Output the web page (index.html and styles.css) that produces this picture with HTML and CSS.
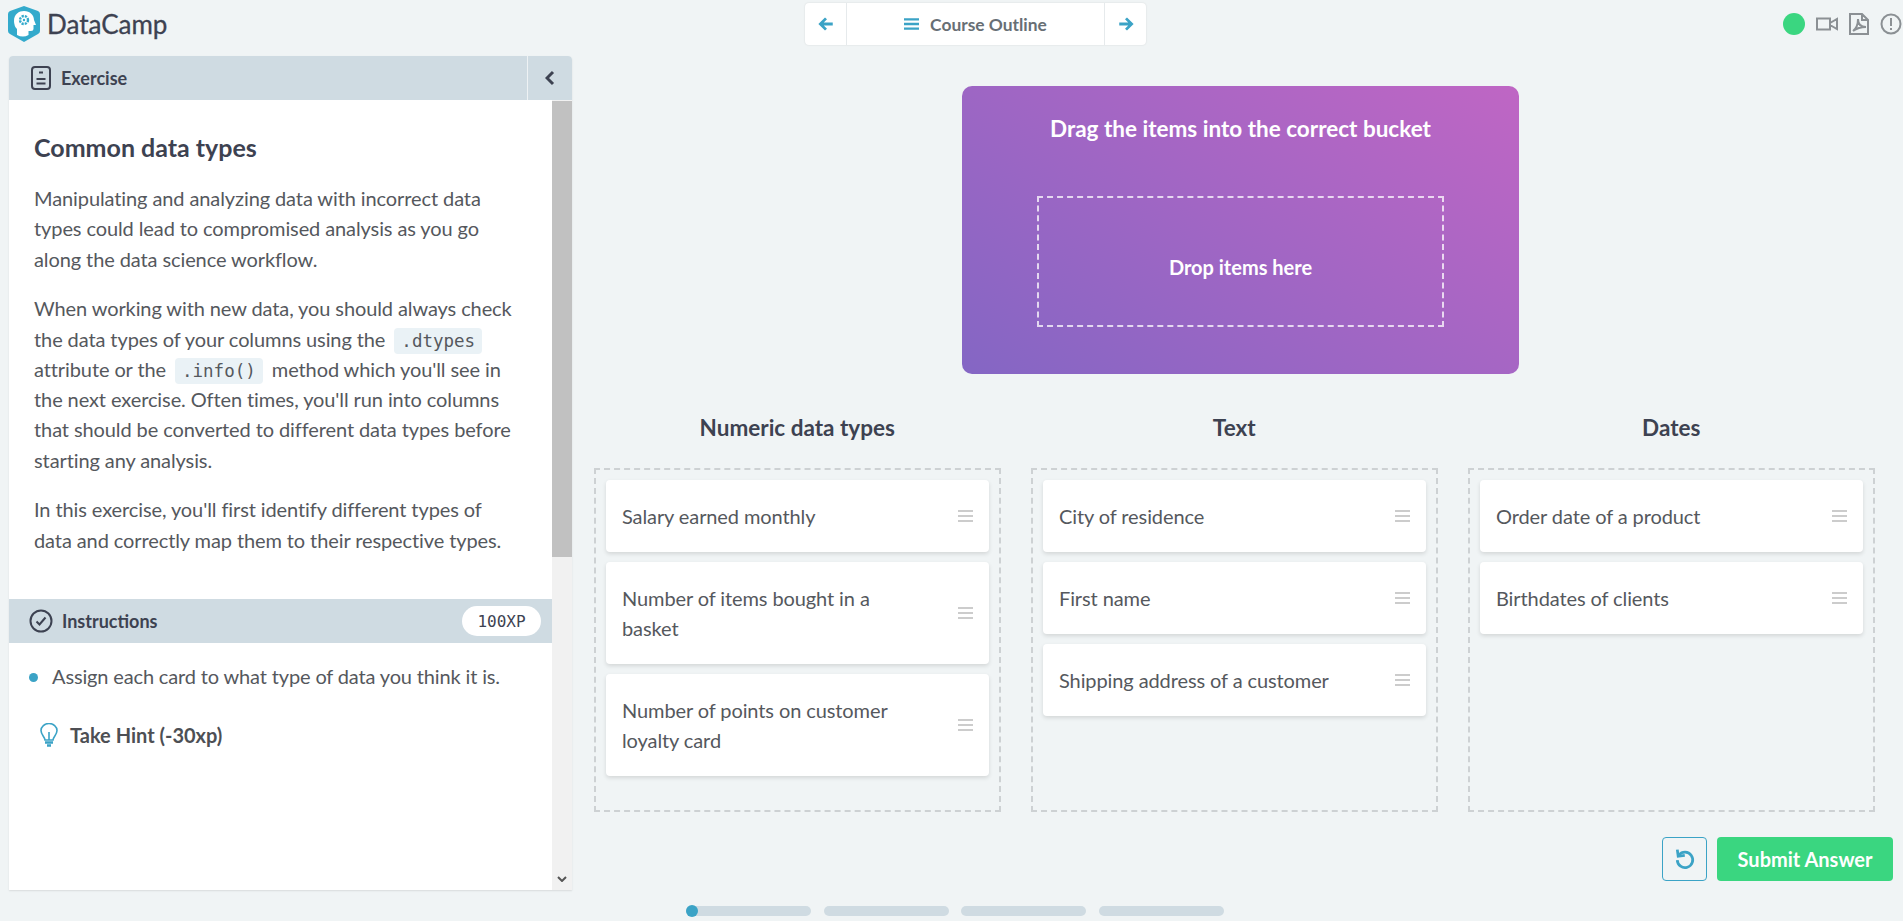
FILE: index.html
```html
<!DOCTYPE html>
<html lang="en">
<head>
  <meta charset="UTF-8">
  <title>Common data types | DataCamp</title>
  <link rel="stylesheet" href="styles.css">
</head>
<body>

<header class="topbar">
  <div class="brand">
    <svg class="brand-logo" viewBox="0 0 32 36" width="32" height="36">
      <path d="M16 0 L30 5 Q32 6 32 8 V25 Q32 27 30 28 L16 36 L2 28 Q0 27 0 25 V8 Q0 6 2 5 Z" fill="#3ac"/>
      <path d="M9 29 V23 Q6 20 6 15 C6 8 11 5 16 5 C22 5 26 9 26 14 L28 19 H25.5 V23 Q25.5 25 23 25 H20.5 V29 Q15 32 9 29 Z" fill="#fff"/>
      <circle cx="16" cy="14" r="4" fill="none" stroke="#3ac" stroke-width="2.4" stroke-dasharray="2.2 1"/>
      <circle cx="16" cy="14" r="1.2" fill="#3ac"/>
    </svg>
    <span>DataCamp</span>
  </div>
  <nav class="course-nav">
    <a class="nav-arrow">
      <svg viewBox="0 0 16 16" width="18" height="18"><path d="M14 8H3M8 3L3 8l5 5" class="icon-blue"/></svg>
    </a>
    <a class="nav-outline">
      <svg viewBox="0 0 16 14" width="15" height="14"><path d="M0 2h16M0 7h16M0 12h16" class="icon-blue"/></svg>
      Course Outline
    </a>
    <a class="nav-arrow">
      <svg viewBox="0 0 16 16" width="18" height="18"><path d="M2 8h11M8 3l5 5-5 5" class="icon-blue"/></svg>
    </a>
  </nav>
  <div class="status">
    <span class="status-dot"></span>
    <svg viewBox="0 0 22 14" width="22" height="14"><path d="M1 1.500h13v11H1zM14 6l7-4v10l-7-4" class="icon-grey"/></svg>
    <svg viewBox="0 0 20 22" width="20" height="22"><path d="M1 1h12l6 6v14H1zM13 1v6h6M4 18c4-3 5-8 5-12 0 5 3 8 8 8-5 0-9 1-13 4z" class="icon-grey"/></svg>
    <svg viewBox="0 0 22 22" width="22" height="22"><circle cx="11" cy="11" r="9.500" class="icon-grey"/><path d="M11 5v8M11 15v2" class="icon-grey"/></svg>
  </div>
</header>

<main class="workspace">
  <aside class="panel">
    <div class="panel-head">
      <div class="panel-title">
        <svg viewBox="0 0 20 24" width="20" height="24"><rect x="1" y="1" width="18" height="22" rx="3" class="icon-dark"/><path d="M8 6.500h4M5.500 13h9M5.500 17.500h9" class="icon-dark"/></svg>
        Exercise
      </div>
      <button class="collapse">
        <svg viewBox="0 0 10 16" width="10" height="16"><path d="M8 2L2 8l6 6" class="icon-dark thick"/></svg>
      </button>
    </div>
    <div class="panel-scroll">
      <div class="panel-body">
        <section class="assignment">
          <h1>Common data types</h1>
          <p>Manipulating and analyzing data with incorrect data types could lead to compromised analysis as you go along the data science workflow.</p>
          <p>When working with new data, you should always check the data types of your columns using the <code>.dtypes</code> attribute or the <code>.info()</code> method which you'll see in the next exercise. Often times, you'll run into columns that should be converted to different data types before starting any analysis.</p>
          <p>In this exercise, you'll first identify different types of data and correctly map them to their respective types.</p>
        </section>
        <div class="instructions-head">
          <div class="panel-title">
            <svg viewBox="0 0 24 24" width="24" height="24"><circle cx="12" cy="12" r="10.500" class="icon-dark"/><path d="M7.500 12.500l3 3 6-7" class="icon-dark"/></svg>
            Instructions
          </div>
          <span class="xp">100XP</span>
        </div>
        <ul class="instructions">
          <li>Assign each card to what type of data you think it is.</li>
        </ul>
        <a class="hint">
          <svg viewBox="0 0 20 24" width="20" height="24"><path d="M6 17c0-3-4-5-4-9.500a8 7 0 0 1 16 0C18 12 14 14 14 17z M10 17V9" class="icon-blue thin"/><path d="M6 19.500h8M8 22.500h4" class="icon-blue"/></svg>
          Take Hint (-30xp)
        </a>
      </div>
      <div class="scrollbar">
        <div class="scroll-thumb"></div>
        <svg class="scroll-down" viewBox="0 0 10 6" width="10" height="6"><path d="M1 1l4 4 4-4" class="icon-grey-dark"/></svg>
      </div>
    </div>
  </aside>

  <section class="exercise">
    <div class="prompt">
      <h2>Drag the items into the correct bucket</h2>
      <div class="drop-zone">Drop items here</div>
    </div>

    <div class="buckets">
      <div class="bucket">
        <h3>Numeric data types</h3>
        <div class="bucket-list">
          <div class="item"><span>Salary earned monthly</span><i class="grip"></i></div>
          <div class="item"><span>Number of items bought in a basket</span><i class="grip"></i></div>
          <div class="item"><span>Number of points on customer loyalty card</span><i class="grip"></i></div>
        </div>
      </div>
      <div class="bucket">
        <h3>Text</h3>
        <div class="bucket-list">
          <div class="item"><span>City of residence</span><i class="grip"></i></div>
          <div class="item"><span>First name</span><i class="grip"></i></div>
          <div class="item"><span>Shipping address of a customer</span><i class="grip"></i></div>
        </div>
      </div>
      <div class="bucket">
        <h3>Dates</h3>
        <div class="bucket-list">
          <div class="item"><span>Order date of a product</span><i class="grip"></i></div>
          <div class="item"><span>Birthdates of clients</span><i class="grip"></i></div>
        </div>
      </div>
    </div>

    <div class="actions">
      <button class="reset">
        <svg viewBox="0 0 20 20" width="22" height="22"><path d="M4.500 6.500A7 7 0 1 1 3 11" class="icon-blue"/><path d="M3 1.500l.800 6 6-.800" class="icon-blue"/></svg>
      </button>
      <button class="submit">Submit Answer</button>
    </div>
  </section>
</main>

<footer class="progress">
  <div class="step current"></div>
  <div class="step"></div>
  <div class="step"></div>
  <div class="step"></div>
</footer>

</body>
</html>
```

FILE: styles.css
```css
* { box-sizing: border-box; }
body { margin: 0; height: 921px; overflow: hidden; font-family: Lato, sans-serif; background: #f0f4f5; color: #4d4f54; }
svg { display: block; flex: none; }

.icon-blue, .icon-grey, .icon-dark, .icon-grey-dark { fill: none; stroke-width: 2; }
.icon-blue { stroke: #3ba3c6; stroke-width: 2.5; }
.icon-blue.thin { stroke-width: 1.6; }
.icon-grey { stroke: #8b9094; stroke-width: 2; }
.icon-grey-dark { stroke: #555; }
.icon-dark { stroke: #3d4251; }
.icon-dark.thick { stroke-width: 3; }

/* top bar */
.topbar { display: grid; grid-template-columns: 805px 341px 1fr; height: 56px; }
.brand { display: flex; align-items: center; gap: 7px; height: 47px; padding-left: 8px; font-size: 26px; color: #3d4251; -webkit-text-stroke: 0.3px #3d4251; }
.course-nav { display: flex; height: 42px; margin-top: 3px; background: #fff; border-radius: 4px; box-shadow: 0 0 2px rgba(0, 0, 0, 0.12); font-size: 17.4px; font-weight: 700; color: #686f75; }
.course-nav a { display: flex; align-items: center; justify-content: center; }
.nav-arrow { width: 41px; }
.nav-outline { flex: 1; gap: 11px; border-left: 1px solid #e6eaec; border-right: 1px solid #e6eaec; }
.status { display: flex; align-items: center; gap: 11px; height: 48px; padding-left: 637px; }
.status-dot { flex: none; width: 22px; height: 22px; border-radius: 50%; background: #3ad680; }

/* left panel */
.workspace { display: flex; height: 834px; padding-left: 9px; }
.panel { display: flex; flex-direction: column; flex: none; width: 563px; background: #fff; border-radius: 4px 4px 0 0; box-shadow: 0 1px 2px rgba(0, 0, 0, 0.1); }
.panel-head { display: flex; justify-content: space-between; flex: none; height: 44px; background: #cfdbe2; border-radius: 4px 4px 0 0; }
.panel-title { display: flex; align-items: center; gap: 9px; font-size: 18px; font-weight: 700; color: #3d4251; }
.panel-head .panel-title { gap: 10px; padding-left: 22px; }
.collapse { width: 45px; padding: 0; display: flex; align-items: center; justify-content: center; background: none; border: none; border-left: 1px solid #eef2f4; }
.panel-scroll { display: flex; flex: 1; min-height: 0; }
.panel-body { flex: 1; }
.scrollbar { display: flex; flex-direction: column; flex: none; width: 20px; padding-top: 1px; background: #f1f1f1; }
.scroll-thumb { height: 456px; background: #c1c1c1; }
.scroll-down { margin: 319px auto 0; }

.assignment { height: 499px; padding: 29px 34px 0 25px; font-size: 20px; line-height: 30.25px; letter-spacing: -0.1px; color: #55585d; }
.assignment h1 { margin: 0 0 18px; font-size: 25px; line-height: 36px; letter-spacing: 0; color: #3d4251; }
.assignment p { margin: 0 0 19.5px; }
code { margin: 0 4px; padding: 3px 7px; border-radius: 4px; background: #eaf2f6; font-family: "DejaVu Sans Mono", monospace; font-size: 17.5px; line-height: 1; letter-spacing: 0; }

.instructions-head { display: flex; justify-content: space-between; align-items: center; height: 44px; padding: 0 11px 0 20px; background: #cfdbe2; }
.xp { display: flex; align-items: center; justify-content: center; width: 79px; height: 30px; border-radius: 15px; background: #fff; font-family: "DejaVu Sans Mono", monospace; font-size: 16px; color: #3d4251; }
.instructions { list-style: none; margin: 18px 0 0; padding: 0 0 0 43px; font-size: 20px; line-height: 30px; letter-spacing: -0.15px; color: #55585d; }
.instructions li { position: relative; }
.instructions li::before { content: ""; position: absolute; left: -23px; top: 12px; width: 9px; height: 9px; border-radius: 50%; background: #3ba3c6; }
.hint { display: flex; align-items: center; gap: 11px; margin: 32px 0 0 30px; font-size: 20px; font-weight: 700; color: #4d4f54; }

/* right side */
.exercise { flex: 1; padding: 30px 0 0 22px; }
.prompt { width: 557px; height: 288px; margin-left: 368px; padding-top: 25px; background: linear-gradient(35deg, #8466c4, #bf66c4); border-radius: 10px; text-align: center; color: #fff; }
.prompt h2 { margin: 0; font-size: 22.5px; line-height: 36px; font-weight: 700; }
.drop-zone { display: flex; align-items: center; justify-content: center; width: 407px; height: 131px; margin: 49px 0 0 75px; padding-top: 10px; border: 2px dashed rgba(255, 255, 255, 0.75); font-size: 20px; font-weight: 700; }

.buckets { display: grid; grid-template-columns: repeat(3, 406.5px); column-gap: 30.5px; margin-top: 36px; }
.bucket h3 { margin: 0 0 22px; height: 36px; font-size: 22.5px; line-height: 36px; text-align: center; color: #3d4251; }
.bucket-list { display: flex; flex-direction: column; gap: 10px; height: 344px; padding: 10px; border: 2px dashed #cdd1d3; }
.item { display: flex; align-items: center; justify-content: space-between; padding: 21px 16px; background: #fff; border-radius: 4px; box-shadow: 0 2px 4px rgba(0, 0, 0, 0.12); font-size: 20px; line-height: 30px; letter-spacing: -0.1px; color: #55585d; }
.item span { max-width: 290px; }
.grip { flex: none; width: 15px; height: 12px; border-top: 2px solid #ccc; border-bottom: 2px solid #ccc; position: relative; }
.grip::after { content: ""; position: absolute; left: 0; right: 0; top: 3px; height: 2px; background: #ccc; }

.actions { display: flex; justify-content: flex-end; gap: 10px; margin-top: 25px; padding-right: 10px; }
.reset { display: flex; align-items: center; justify-content: center; width: 45px; height: 44px; padding: 0; background: none; border: 1px solid #3ba3c6; border-radius: 4px; }
.submit { width: 176px; height: 44px; padding: 0; background: #3ad680; border: none; border-radius: 4px; font-family: Lato, sans-serif; font-size: 20px; font-weight: 700; color: #fff; }

/* exercise progress */
.progress { display: flex; gap: 12.5px; padding: 16px 0 0 686px; }
.step { width: 125px; height: 10px; border-radius: 5px; background: #cfdbe2; }
.current { position: relative; }
.current::before { content: ""; position: absolute; left: 0; top: -1px; width: 12px; height: 12px; border-radius: 50%; background: #3ba3c6; }
```
